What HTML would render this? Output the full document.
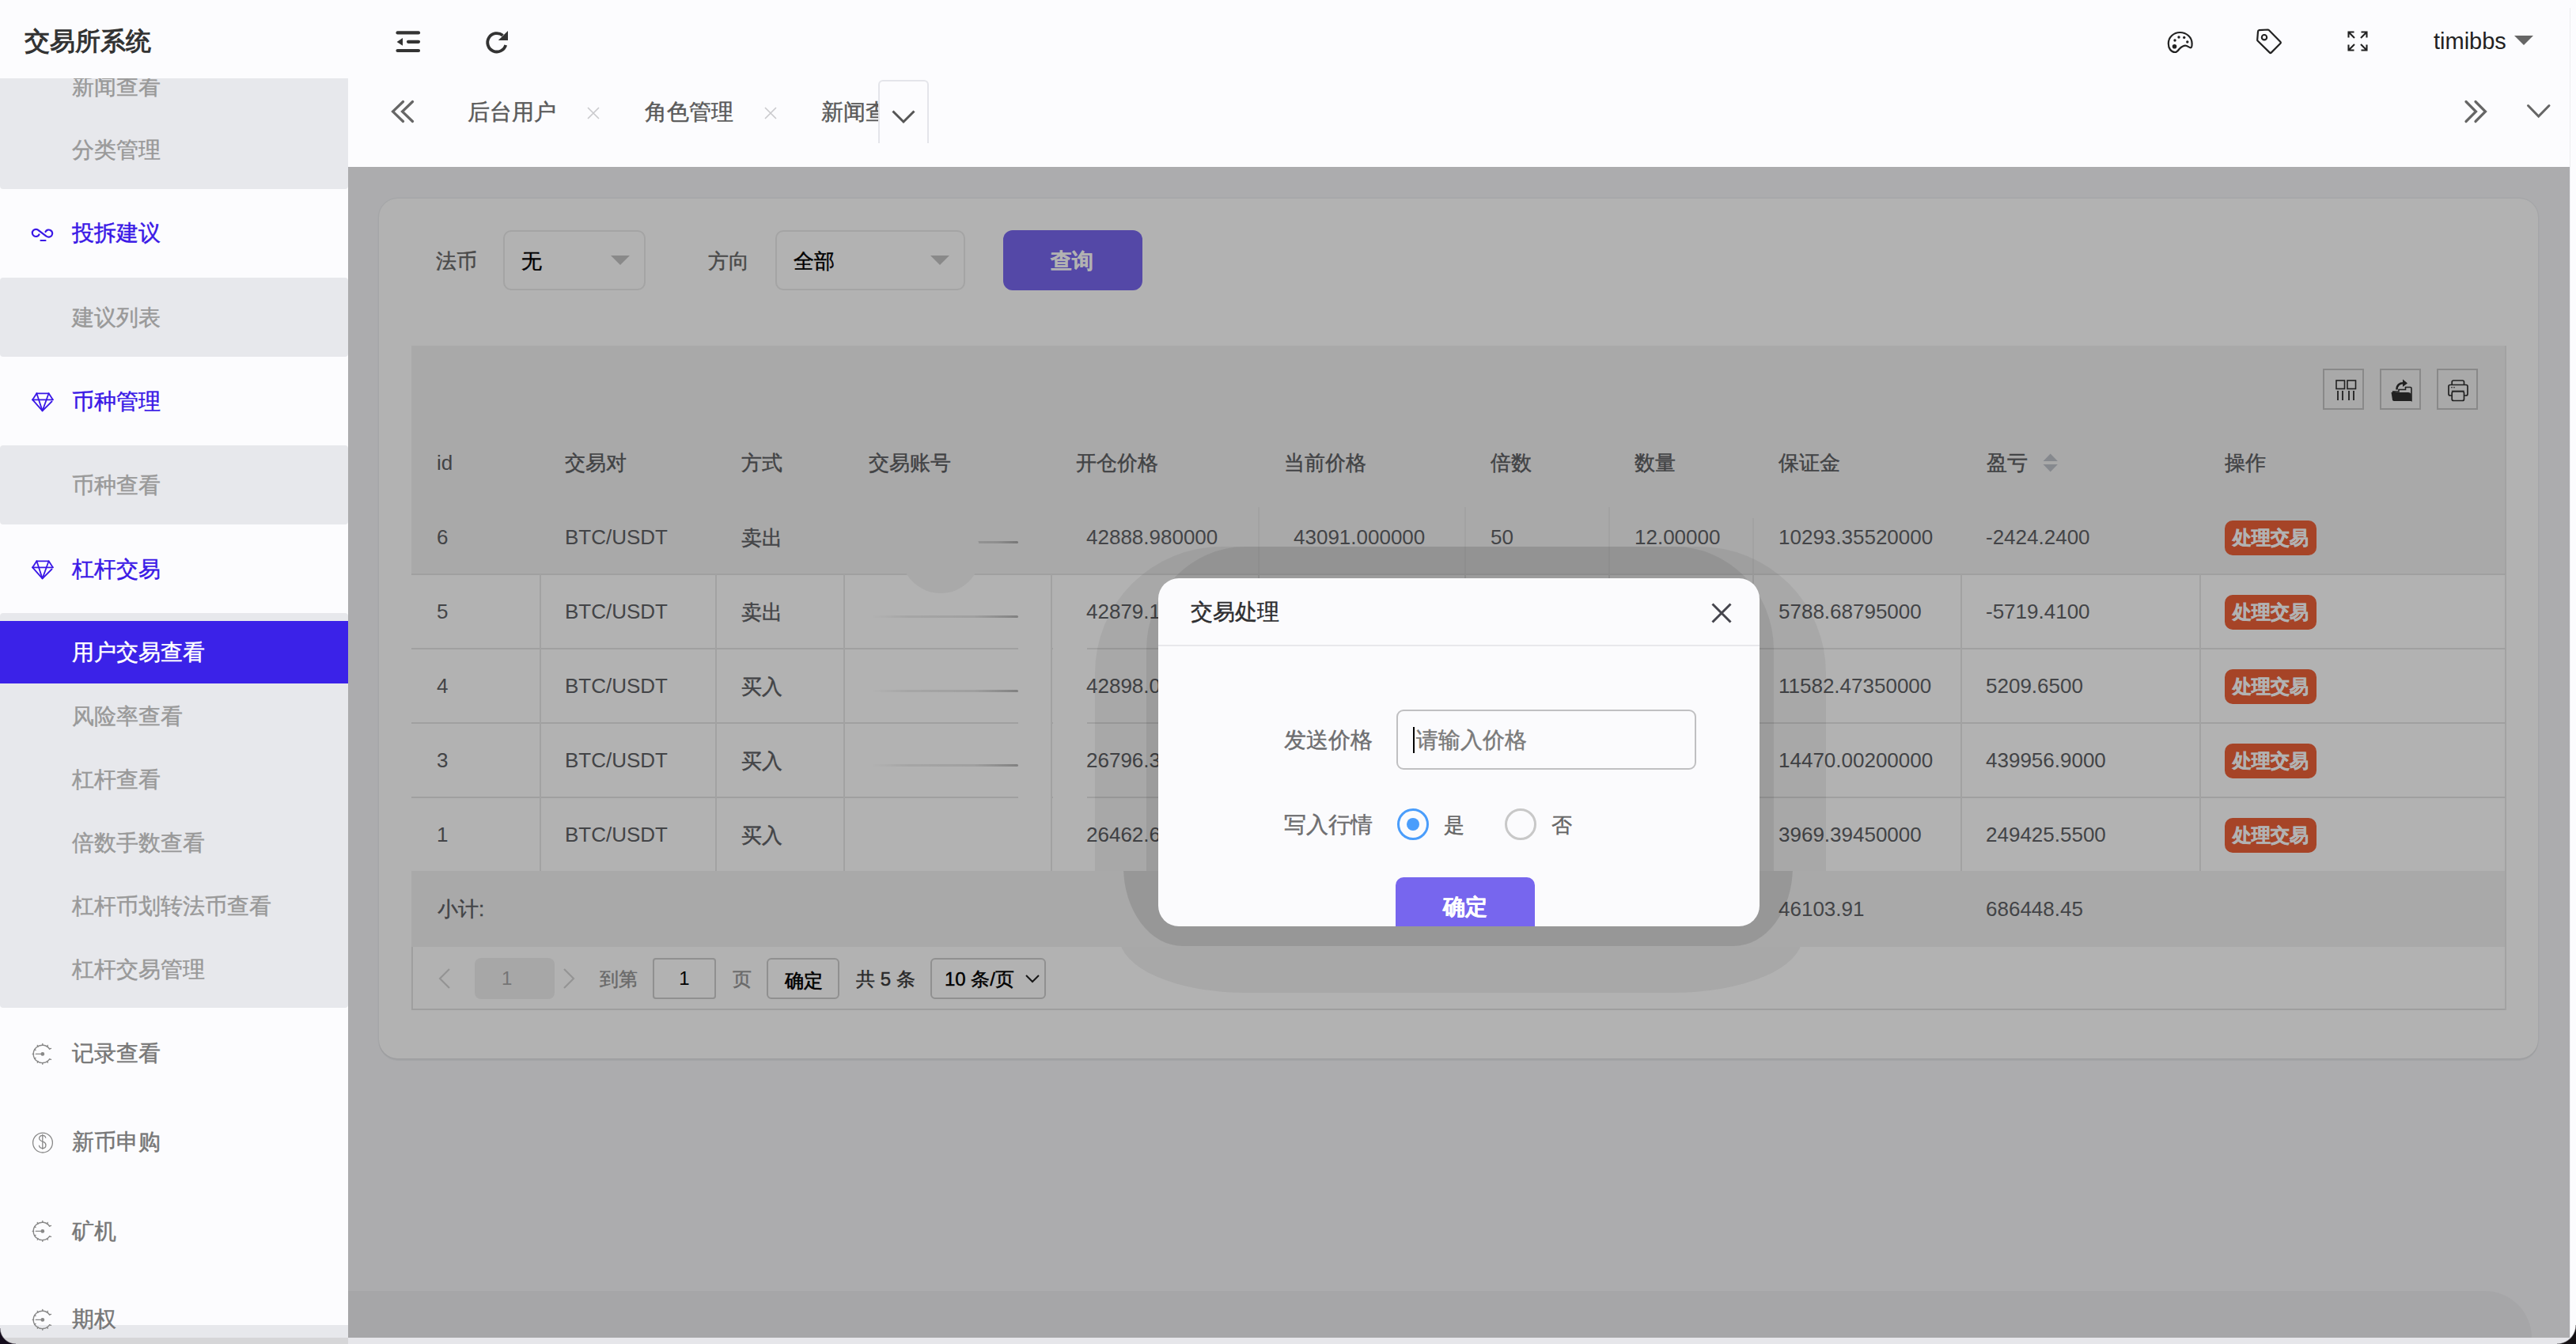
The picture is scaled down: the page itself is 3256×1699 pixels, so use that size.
<!DOCTYPE html>
<html><head><meta charset="utf-8">
<style>
*{box-sizing:border-box;margin:0;padding:0}
html,body{width:3256px;height:1699px;overflow:hidden;background:#d6d6d8;font-family:"Liberation Sans",sans-serif;-webkit-text-stroke-width:0.45px}
.a{position:absolute}
.t{position:absolute;white-space:nowrap;line-height:1}
svg{position:absolute;overflow:visible}
#side{left:0;top:0;width:440px;height:1691px;background:#fcfcfe;overflow:hidden}
.blk{position:absolute;left:0;width:440px;background:#e7e8ec;border-radius:4px}
.mt{position:absolute;left:91px;font-size:28px;color:#3a18e6;line-height:1;white-space:nowrap}
.mg{position:absolute;left:91px;font-size:28px;color:#777;line-height:1;white-space:nowrap}
.si{position:absolute;left:91px;font-size:28px;color:#999;line-height:1;white-space:nowrap}
.th{position:absolute;font-size:26px;color:#5e6063;line-height:1;white-space:nowrap;top:572px}
.td{position:absolute;font-size:26px;color:#606266;line-height:1;white-space:nowrap}
.tag{position:absolute;left:2812px;width:116px;height:44px;background:#ee6239;border-radius:10px;color:#fff;font-size:24px;font-weight:bold;line-height:44px;text-align:center;white-space:nowrap;-webkit-text-stroke:0.5px #fff}
.vl{position:absolute;width:2px;background:#e8e8e8}
.hl{position:absolute;height:2px;background:#e6e6e6;left:520px;width:2647px}
</style></head><body>
<!-- ============ SIDEBAR ============ -->
<div id="side" class="a">
  <div class="blk" style="top:50px;height:189px;border-radius:0 0 4px 4px"></div>
  <div class="si" style="top:96px">新闻查看</div>
  <div class="si" style="top:176px">分类管理</div>
  <svg style="left:40px;top:288px" width="28" height="18" viewBox="0 0 28 18"><g fill="none" stroke="#3a18e6" stroke-width="2.2" stroke-linecap="round"><path d="M9.5,8.5 A4.6,4.6 0 1 1 9,3.5 L18.5,10.5 A4.6,4.6 0 1 0 17.5,5"/><path d="M11.5,16 H17.5"/></g></svg>
  <div class="mt" style="top:281px">投拆建议</div>
  <div class="blk" style="top:351px;height:100px"></div>
  <div class="si" style="top:388px">建议列表</div>
  <svg style="left:40px;top:495px" width="28" height="26" viewBox="0 0 28 26"><g fill="none" stroke="#3a18e6" stroke-width="1.8" stroke-linejoin="round" stroke-linecap="round"><path d="M6.4,2.3 H21.6 L26.8,10.3"/><path d="M1.2,10.3 L6.4,2.3"/><path d="M1.2,10.3 H26.8"/><path d="M6.4,2.3 L13.6,24.4 L21.6,2.3"/><path d="M1.2,10.3 L13.6,24.4 L25.5,12.5"/></g></svg>
  <div class="mt" style="top:494px">币种管理</div>
  <div class="blk" style="top:563px;height:100px"></div>
  <div class="si" style="top:600px">币种查看</div>
  <svg style="left:40px;top:707px" width="28" height="26" viewBox="0 0 28 26"><g fill="none" stroke="#3a18e6" stroke-width="1.8" stroke-linejoin="round" stroke-linecap="round"><path d="M6.4,2.3 H21.6 L26.8,10.3"/><path d="M1.2,10.3 L6.4,2.3"/><path d="M1.2,10.3 H26.8"/><path d="M6.4,2.3 L13.6,24.4 L21.6,2.3"/><path d="M1.2,10.3 L13.6,24.4 L25.5,12.5"/></g></svg>
  <div class="mt" style="top:706px">杠杆交易</div>
  <div class="blk" style="top:775px;height:499px"></div>
  <div class="a" style="left:0;top:785px;width:440px;height:79px;background:#3b22e8"></div>
  <div class="si" style="top:811px;color:#fff">用户交易查看</div>
  <div class="si" style="top:892px">风险率查看</div>
  <div class="si" style="top:972px">杠杆查看</div>
  <div class="si" style="top:1052px">倍数手数查看</div>
  <div class="si" style="top:1132px">杠杆币划转法币查看</div>
  <div class="si" style="top:1212px">杠杆交易管理</div>
  <svg id="dial1" style="left:40px;top:1318px" width="28" height="28" viewBox="0 0 28 28"><g fill="none" stroke="#888" stroke-width="1.4" stroke-linecap="round"><path d="M22.6,8 A11.2,11.2 0 1 0 22.6,20.8"/><path d="M5.3,14.4 H13.8"/><path d="M13.8,1.5 V3.2 M13.8,25.6 V27.3 M1.2,14.4 H2.6 M7.3,3.5 L8,5.2 M20.3,3.5 L19.6,5.2 M7.3,25.3 L8,23.6 M20.3,25.3 L19.6,23.6 M3.6,8.5 L5,9.4 M3.6,20.3 L5,19.4 M22.6,8 L24.5,7.4 M22.6,20.8 L24.5,21.4"/></g><circle cx="13.8" cy="14.4" r="2.4" fill="#888"/></svg>
  <div class="mg" style="top:1318px">记录查看</div>
  <svg style="left:41px;top:1432px" width="26" height="26" viewBox="0 0 26 26"><circle cx="13" cy="12.6" r="12.4" fill="none" stroke="#888" stroke-width="1.3"/><path d="M16.8,6.6 C16.5,4.3 14.5,3.2 12.6,3.3 C10.2,3.4 8.4,4.9 8.6,7.2 C8.9,10.2 12.4,10.8 14.3,11.7 C16.2,12.6 17.2,14 16.9,16.3 C16.6,18.5 14.7,19.6 12.6,19.5 C10.4,19.4 8.6,18.3 8.4,15.7 M12.8,1.8 V21" fill="none" stroke="#888" stroke-width="1.3"/></svg>
  <div class="mg" style="top:1430px">新币申购</div>
  <svg style="left:40px;top:1542px" width="28" height="28" viewBox="0 0 28 28"><g fill="none" stroke="#888" stroke-width="1.4" stroke-linecap="round"><path d="M22.6,8 A11.2,11.2 0 1 0 22.6,20.8"/><path d="M5.3,14.4 H13.8"/><path d="M13.8,1.5 V3.2 M13.8,25.6 V27.3 M1.2,14.4 H2.6 M7.3,3.5 L8,5.2 M20.3,3.5 L19.6,5.2 M7.3,25.3 L8,23.6 M20.3,25.3 L19.6,23.6 M3.6,8.5 L5,9.4 M3.6,20.3 L5,19.4 M22.6,8 L24.5,7.4 M22.6,20.8 L24.5,21.4"/></g><circle cx="13.8" cy="14.4" r="2.4" fill="#888"/></svg>
  <div class="mg" style="top:1543px">矿机</div>
  <div class="a" style="left:0;top:1675px;width:440px;height:16px;background:#e7e8ec"></div>
  <svg style="left:40px;top:1654px" width="28" height="28" viewBox="0 0 28 28"><g fill="none" stroke="#888" stroke-width="1.4" stroke-linecap="round"><path d="M22.6,8 A11.2,11.2 0 1 0 22.6,20.8"/><path d="M5.3,14.4 H13.8"/><path d="M13.8,1.5 V3.2 M13.8,25.6 V27.3 M1.2,14.4 H2.6 M7.3,3.5 L8,5.2 M20.3,3.5 L19.6,5.2 M7.3,25.3 L8,23.6 M20.3,25.3 L19.6,23.6 M3.6,8.5 L5,9.4 M3.6,20.3 L5,19.4 M22.6,8 L24.5,7.4 M22.6,20.8 L24.5,21.4"/></g><circle cx="13.8" cy="14.4" r="2.4" fill="#888"/></svg>
  <div class="mg" style="top:1654px">期权</div>
</div>

<!-- ============ HEADER ============ -->
<div class="a" style="left:0;top:0;width:3256px;height:99px;background:#fcfcfe"></div>
<div class="t" style="left:31px;top:36px;font-size:32px;font-weight:bold;color:#333;-webkit-text-stroke-width:0">交易所系统</div>
<svg style="left:498px;top:37px" width="36" height="32" viewBox="0 0 36 32"><g stroke="#333" stroke-width="4.2" stroke-linecap="round"><path d="M4.5,4.4 H31"/><path d="M18,15.8 H31"/><path d="M4.5,27 H31"/></g><path d="M3.6,16 L11,11 V20.8 Z" fill="#333"/></svg>
<svg style="left:610px;top:35px" width="36" height="36" viewBox="0 0 36 36"><path d="M29.2,22 A11.7,11.7 0 1 1 25.5,9.8" fill="none" stroke="#333" stroke-width="3.8"/><path d="M32,4 V16.1 H19.8 Z" fill="#333"/></svg>
<!-- right header icons -->
<svg style="left:2738px;top:38px" width="36" height="32" viewBox="0 0 36 32"><path d="M11.4,28 C6,28 2.8,23 2.8,17 C2.8,9 9.5,3 17.4,3 C25.5,3 32.6,9 32.6,17 C32.6,20 32.5,22.3 31,22.3 C29,22.3 27,19.7 24.3,19.7 C21,19.7 19,21.5 16.5,24 C15,26 13.5,28 11.4,28 Z" fill="none" stroke="#222" stroke-width="2.2" stroke-linejoin="round"/><circle cx="10.5" cy="20.7" r="2.8" fill="#222"/><circle cx="11" cy="13" r="1.7" fill="#222"/><circle cx="16" cy="9" r="1.7" fill="#222"/><circle cx="22.7" cy="9.4" r="1.7" fill="#222"/><circle cx="26.8" cy="15" r="1.7" fill="#222"/></svg>
<svg style="left:2850px;top:35px" width="36" height="36" viewBox="0 0 36 36"><path d="M4,5 Q4,3.3 5.5,3.1 L16.5,2.5 Q17.3,2.5 18,3.2 L32.5,18 Q33.3,19 32.5,19.8 L20.7,31.6 Q19.8,32.4 19,31.6 L3.8,16.8 Q3.2,16.2 3.2,15.4 Z" fill="none" stroke="#222" stroke-width="2.2" stroke-linejoin="round"/><circle cx="12" cy="12.2" r="3.2" fill="none" stroke="#222" stroke-width="2.1"/></svg>
<svg style="left:2966px;top:38px" width="28" height="28" viewBox="0 0 28 28"><g fill="none" stroke="#222" stroke-width="2.1"><path d="M2.5,9.5 V2.5 H9.5 M2.5,2.5 L10,10"/><path d="M18.5,2.5 H25.5 V9.5 M25.5,2.5 L18,10"/><path d="M2.5,18.5 V25.5 H9.5 M2.5,25.5 L10,18"/><path d="M25.5,18.5 V25.5 H18.5 M25.5,25.5 L18,18"/></g></svg>
<div class="t" style="left:3076px;top:38px;font-size:29px;color:#222;-webkit-text-stroke-width:0">timibbs</div>
<svg style="left:3178px;top:45px" width="25" height="13" viewBox="0 0 25 13"><path d="M0,0 H24 L12,12 Z" fill="#666"/></svg>
<div class="a" style="left:3248px;top:10px;width:1px;height:201px;background:#ececef"></div>

<!-- ============ TABS ============ -->
<div class="a" style="left:440px;top:99px;width:2808px;height:112px;background:#fcfcfe"></div>
<svg style="left:492px;top:125px" width="34" height="32" viewBox="0 0 34 32"><g fill="none" stroke="#666" stroke-width="3.2" stroke-linecap="round" stroke-linejoin="miter"><path d="M17.5,3.5 L4.5,16 L17.5,28.5"/><path d="M29.5,3.5 L16.5,16 L29.5,28.5"/></g></svg>
<div class="t" style="left:591px;top:128px;font-size:28px;color:#5a5a5a">后台用户</div>
<svg style="left:742px;top:135px" width="16" height="16" viewBox="0 0 16 16"><path d="M1,1 L15,15 M15,1 L1,15" stroke="#c9c9cc" stroke-width="1.6"/></svg>
<div class="t" style="left:815px;top:128px;font-size:28px;color:#5a5a5a">角色管理</div>
<svg style="left:966px;top:135px" width="16" height="16" viewBox="0 0 16 16"><path d="M1,1 L15,15 M15,1 L1,15" stroke="#c9c9cc" stroke-width="1.6"/></svg>
<div class="a" style="left:1038px;top:99px;width:72px;height:112px;overflow:hidden"><div class="t" style="left:0;top:29px;font-size:28px;color:#5a5a5a">新闻查看</div></div>
<div class="a" style="left:1110px;top:101px;width:64px;height:80px;border:2px solid #e4e5ea;border-bottom:none;border-radius:6px 6px 0 0;background:#fcfcfe"></div>
<svg style="left:1126px;top:138px" width="32" height="20" viewBox="0 0 32 20"><path d="M2.5,2.5 L16,16 L29.5,2.5" fill="none" stroke="#555" stroke-width="3"/></svg>
<svg style="left:3113px;top:125px" width="34" height="32" viewBox="0 0 34 32"><g fill="none" stroke="#666" stroke-width="3.2" stroke-linecap="round"><path d="M4,3.5 L16.5,16 L4,28.5"/><path d="M16,3.5 L28.5,16 L16,28.5"/></g></svg>
<svg style="left:3193px;top:131px" width="32" height="20" viewBox="0 0 32 20"><path d="M2.5,2.5 L15.7,16 L29,2.5" fill="none" stroke="#666" stroke-width="3" stroke-linecap="round"/></svg>

<!-- ============ CONTENT ============ -->
<div id="content" class="a" style="left:440px;top:211px;width:2808px;height:1480px;background:#f6f7fa;overflow:hidden"></div>
<div class="a" style="left:479px;top:251px;width:2729px;height:1087px;background:#fff;border-radius:24px;box-shadow:0 3px 0 rgba(0,0,0,.045),0 0 0 1.5px rgba(0,0,0,.035)"></div>
<!-- filter -->
<div class="t" style="left:551px;top:317px;font-size:26px;color:#6a6a6a">法币</div>
<div class="a" style="left:636px;top:291px;width:180px;height:76px;border:2px solid #ebebeb;border-radius:10px"></div>
<div class="t" style="left:659px;top:317px;font-size:26px;color:#000">无</div>
<svg style="left:772px;top:323px" width="24" height="12" viewBox="0 0 24 12"><path d="M0,0 H24 L12,12 Z" fill="#c5c5c5"/></svg>
<div class="t" style="left:895px;top:317px;font-size:26px;color:#6a6a6a">方向</div>
<div class="a" style="left:980px;top:291px;width:240px;height:76px;border:2px solid #ebebeb;border-radius:10px"></div>
<div class="t" style="left:1003px;top:317px;font-size:26px;color:#000">全部</div>
<svg style="left:1176px;top:323px" width="24" height="12" viewBox="0 0 24 12"><path d="M0,0 H24 L12,12 Z" fill="#c5c5c5"/></svg>
<div class="a" style="left:1268px;top:291px;width:176px;height:76px;background:#7968f0;border-radius:12px"></div>
<div class="t" style="left:1328px;top:317px;font-size:27px;font-weight:bold;color:#fff;-webkit-text-stroke-width:0.2px">查询</div>

<!-- table -->
<div class="a" style="left:520px;top:437px;width:2647px;height:195px;background:#f3f3f3"></div>
<div class="a" style="left:520px;top:632px;width:2647px;height:94px;background:#f3f3f3"></div>
<div class="vl" style="left:1590px;top:641px;height:85px"></div><div class="vl" style="left:1851px;top:641px;height:85px"></div><div class="vl" style="left:2033px;top:641px;height:85px"></div><div class="vl" style="left:2215px;top:655px;height:71px"></div>
<div class="a" style="left:520px;top:1101px;width:2647px;height:96px;background:#f3f3f3"></div>
<div class="a" style="left:520px;top:1197px;width:2px;height:80px;background:#e4e4e4"></div>
<div class="a" style="left:520px;top:1275px;width:2647px;height:2px;background:#e4e4e4"></div>
<div class="a" style="left:3166px;top:437px;width:2px;height:840px;background:#e8e8e8"></div>
<!-- toolbar -->
<div class="a" style="left:2936px;top:466px;width:52px;height:52px;border:2px solid #c4c4c4"></div>
<div class="a" style="left:3008px;top:466px;width:52px;height:52px;border:2px solid #c4c4c4"></div>
<div class="a" style="left:3080px;top:466px;width:52px;height:52px;border:2px solid #c4c4c4"></div>
<svg style="left:2950px;top:478px" width="30" height="30" viewBox="0 0 30 30"><g fill="none" stroke="#303030"><rect x="3" y="3" width="10.5" height="10.5" stroke-width="1.6"/><rect x="17" y="3" width="10.5" height="10.5" stroke-width="1.6"/><path d="M5,16 V28 M11,16 V28 M19,16 V28 M25,16 V28" stroke-width="1.8"/></g></svg>
<svg style="left:3020px;top:478px" width="30" height="32" viewBox="0 0 30 32"><path d="M4,17 H12 V14.5 H20.5 V11.5 H26.5 Q28,11.5 28,13 V28.5 Z" fill="none" stroke="#303030" stroke-width="1.6"/><path d="M2.5,18 H24 Q26.5,18 27.5,20 L28,29 H6 Q4.5,29 4,27.5 Z" fill="#303030"/><path d="M9.5,14.5 C9.5,9 13,6 18,6.2" fill="none" stroke="#303030" stroke-width="2.6"/><path d="M17,1.5 L23,6.4 L17,11 Z" fill="#303030"/></svg>
<svg style="left:3092px;top:478px" width="30" height="32" viewBox="0 0 30 32"><g fill="none" stroke="#303030" stroke-width="1.7"><path d="M7.2,8 V5 Q7.2,3 9.2,3 H20.5 Q22.5,3 22.5,5 V8"/><path d="M7,22 H5 Q3,22 3,20 V10.5 Q3,8.5 5,8.5 H25 Q27,8.5 27,10.5 V20 Q27,22 25,22 H23"/><rect x="7.2" y="17" width="15.3" height="11.5" rx="2"/></g><path d="M6.8,16.2 H22.8" stroke="#303030" stroke-width="1.1"/><path d="M6,11.8 H8 M9,11.8 H11" stroke="#303030" stroke-width="1"/></svg>
<!-- header texts -->
<div class="th" style="-webkit-text-stroke-width:0;left:552px">id</div>
<div class="th" style="left:714px">交易对</div>
<div class="th" style="left:937px">方式</div>
<div class="th" style="left:1098px">交易账号</div>
<div class="th" style="left:1360px">开仓价格</div>
<div class="th" style="left:1623px">当前价格</div>
<div class="th" style="left:1884px">倍数</div>
<div class="th" style="left:2066px">数量</div>
<div class="th" style="left:2248px">保证金</div>
<div class="th" style="left:2511px">盈亏</div>
<svg style="left:2582px;top:573px" width="20" height="24" viewBox="0 0 20 24"><path d="M0.5,10 L9.7,0.6 L18.9,10 Z M0.5,14 L9.7,23.4 L18.9,14 Z" fill="#c0c4cc"/></svg>
<div class="th" style="left:2812px">操作</div>
<div class="hl" style="top:725px"></div>
<div class="hl" style="top:819px"></div>
<div class="hl" style="top:913px"></div>
<div class="hl" style="top:1007px"></div>
<div class="vl" style="left:682px;top:726px;height:375px"></div>
<div class="vl" style="left:904px;top:726px;height:375px"></div>
<div class="vl" style="left:1066px;top:726px;height:375px"></div>
<div class="vl" style="left:1328px;top:726px;height:375px"></div>
<div class="vl" style="left:1590px;top:726px;height:375px"></div>
<div class="vl" style="left:1851px;top:726px;height:375px"></div>
<div class="vl" style="left:2033px;top:726px;height:375px"></div>
<div class="vl" style="left:2215px;top:726px;height:375px"></div>
<div class="vl" style="left:2478px;top:726px;height:375px"></div>
<div class="vl" style="left:2780px;top:726px;height:375px"></div>
<div class="td" style="-webkit-text-stroke-width:0;left:552px;top:666px">6</div>
<div class="td" style="-webkit-text-stroke-width:0;left:714px;top:666px">BTC/USDT</div>
<div class="td" style="left:937px;top:666.5px">卖出</div>
<div class="td" style="-webkit-text-stroke-width:0;left:1373px;top:666px">42888.980000</div>
<div class="td" style="-webkit-text-stroke-width:0;left:1635px;top:666px">43091.000000</div>
<div class="td" style="-webkit-text-stroke-width:0;left:1884px;top:666px">50</div>
<div class="td" style="-webkit-text-stroke-width:0;left:2066px;top:666px">12.00000</div>
<div class="td" style="-webkit-text-stroke-width:0;left:2248px;top:666px">10293.35520000</div>
<div class="td" style="-webkit-text-stroke-width:0;left:2510px;top:666px">-2424.2400</div>
<div class="tag" style="top:658px">处理交易</div>
<div class="td" style="-webkit-text-stroke-width:0;left:552px;top:760px">5</div>
<div class="td" style="-webkit-text-stroke-width:0;left:714px;top:760px">BTC/USDT</div>
<div class="td" style="left:937px;top:760.5px">卖出</div>
<div class="td" style="-webkit-text-stroke-width:0;left:1373px;top:760px">42879.1</div>
<div class="td" style="-webkit-text-stroke-width:0;left:2248px;top:760px">5788.68795000</div>
<div class="td" style="-webkit-text-stroke-width:0;left:2510px;top:760px">-5719.4100</div>
<div class="tag" style="top:752px">处理交易</div>
<div class="td" style="-webkit-text-stroke-width:0;left:552px;top:854px">4</div>
<div class="td" style="-webkit-text-stroke-width:0;left:714px;top:854px">BTC/USDT</div>
<div class="td" style="left:937px;top:854.5px">买入</div>
<div class="td" style="-webkit-text-stroke-width:0;left:1373px;top:854px">42898.0</div>
<div class="td" style="-webkit-text-stroke-width:0;left:2248px;top:854px">11582.47350000</div>
<div class="td" style="-webkit-text-stroke-width:0;left:2510px;top:854px">5209.6500</div>
<div class="tag" style="top:846px">处理交易</div>
<div class="td" style="-webkit-text-stroke-width:0;left:552px;top:948px">3</div>
<div class="td" style="-webkit-text-stroke-width:0;left:714px;top:948px">BTC/USDT</div>
<div class="td" style="left:937px;top:948.5px">买入</div>
<div class="td" style="-webkit-text-stroke-width:0;left:1373px;top:948px">26796.3</div>
<div class="td" style="-webkit-text-stroke-width:0;left:2248px;top:948px">14470.00200000</div>
<div class="td" style="-webkit-text-stroke-width:0;left:2510px;top:948px">439956.9000</div>
<div class="tag" style="top:940px">处理交易</div>
<div class="td" style="-webkit-text-stroke-width:0;left:552px;top:1042px">1</div>
<div class="td" style="-webkit-text-stroke-width:0;left:714px;top:1042px">BTC/USDT</div>
<div class="td" style="left:937px;top:1042.5px">买入</div>
<div class="td" style="-webkit-text-stroke-width:0;left:1373px;top:1042px">26462.6</div>
<div class="td" style="-webkit-text-stroke-width:0;left:2248px;top:1042px">3969.39450000</div>
<div class="td" style="-webkit-text-stroke-width:0;left:2510px;top:1042px">249425.5500</div>
<div class="tag" style="top:1034px">处理交易</div>
<div class="td" style="left:553px;top:1136px">小计:</div>
<div class="td" style="-webkit-text-stroke-width:0;left:2248px;top:1136px">46103.91</div>
<div class="td" style="-webkit-text-stroke-width:0;left:2510px;top:1136px">686448.45</div>
<svg style="left:553px;top:1223px" width="18" height="28" viewBox="0 0 18 28"><path d="M15,2 L3,14 L15,26" fill="none" stroke="#d5d5d5" stroke-width="2.2"/></svg>
<div class="a" style="left:600px;top:1211px;width:101px;height:52px;background:#f0f0f0;border-radius:8px"></div>
<div class="t" style="left:634px;top:1225px;font-size:24px;color:#a8a8a8;-webkit-text-stroke-width:0">1</div>
<svg style="left:710px;top:1223px" width="18" height="28" viewBox="0 0 18 28"><path d="M3,2 L15,14 L3,26" fill="none" stroke="#d5d5d5" stroke-width="2.2"/></svg>
<div class="t" style="left:758px;top:1226px;font-size:24px;color:#989898">到第</div>
<div class="a" style="left:825px;top:1211px;width:80px;height:52px;border:2px solid #cecece;border-radius:4px"></div>
<div class="t" style="left:825px;top:1225px;width:80px;text-align:center;font-size:24px;color:#000;-webkit-text-stroke-width:0">1</div>
<div class="t" style="left:926px;top:1226px;font-size:24px;color:#989898">页</div>
<div class="a" style="left:969px;top:1211px;width:92px;height:52px;border:2px solid #cecece;border-radius:6px"></div>
<div class="t" style="left:992px;top:1228px;font-size:24px;color:#000;-webkit-text-stroke:0.6px #000">确定</div>
<div class="t" style="left:1082px;top:1226px;font-size:24px;color:#3c3c3c">共 5 条</div>
<div class="a" style="left:1176px;top:1211px;width:146px;height:52px;border:2px solid #cecece;border-radius:6px"></div>
<div class="t" style="left:1194px;top:1226px;font-size:24px;color:#000">10 条/页</div>
<svg style="left:1295px;top:1230px" width="20" height="14" viewBox="0 0 20 14"><path d="M2,3 L10,11 L18,3" fill="none" stroke="#222" stroke-width="2"/></svg>
<div class="a" style="left:1182px;top:684px;width:105px;height:3px;border-radius:2px;background:linear-gradient(90deg,rgba(0,0,0,.05),rgba(0,0,0,.12) 40%,rgba(0,0,0,.16) 75%,rgba(0,0,0,.3))"></div>
<div class="a" style="left:1102px;top:778px;width:185px;height:3px;border-radius:2px;background:linear-gradient(90deg,rgba(0,0,0,0),rgba(0,0,0,.07) 25%,rgba(0,0,0,.1) 70%,rgba(0,0,0,.28))"></div>
<div class="a" style="left:1102px;top:872px;width:185px;height:3px;border-radius:2px;background:linear-gradient(90deg,rgba(0,0,0,0),rgba(0,0,0,.07) 25%,rgba(0,0,0,.1) 70%,rgba(0,0,0,.28))"></div>
<div class="a" style="left:1102px;top:966px;width:185px;height:3px;border-radius:2px;background:linear-gradient(90deg,rgba(0,0,0,0),rgba(0,0,0,.07) 25%,rgba(0,0,0,.1) 70%,rgba(0,0,0,.28))"></div>
<div class="a" style="left:1287px;top:819px;width:41px;height:2px;background:#fff"></div><div class="a" style="left:1331px;top:819px;width:43px;height:2px;background:#fff"></div><div class="a" style="left:1287px;top:913px;width:41px;height:2px;background:#fff"></div><div class="a" style="left:1331px;top:913px;width:43px;height:2px;background:#fff"></div><div class="a" style="left:1287px;top:1007px;width:41px;height:2px;background:#fff"></div><div class="a" style="left:1331px;top:1007px;width:43px;height:2px;background:#fff"></div>
<div class="a" style="left:1139px;top:650px;width:100px;height:100px;background:#f3f3f3;border-radius:50%"></div>
<!-- ============ OVERLAY ============ -->
<div class="a" style="left:440px;top:211px;width:2808px;height:1480px;background:rgba(0,0,0,.3)"></div>
<div class="a" style="left:440px;top:1632px;width:2760px;height:59px;background:rgba(0,0,0,.03);border-radius:0 200px 0 0"></div>
<!-- ghost shadows -->
<div class="a" style="left:1300px;top:691px;width:1100px;height:410px;overflow:hidden">
  <div class="a" style="left:84px;top:0;width:924px;height:700px;background:rgba(0,0,0,.055);border-radius:160px"></div>
  <div class="a" style="left:149px;top:0;width:793px;height:700px;background:rgba(0,0,0,.07);border-radius:125px/130px"></div>
</div>
<div class="a" style="left:1300px;top:1101px;width:1100px;height:96px;overflow:hidden">
  <div class="a" style="left:120px;top:-300px;width:846px;height:395px;background:rgba(0,0,0,.1);border-radius:0 0 75px 75px/0 0 100px 100px"></div>
</div>
<div class="a" style="left:1300px;top:1197px;width:1100px;height:60px;overflow:hidden">
  <div class="a" style="left:115px;top:-400px;width:863px;height:458px;background:rgba(0,0,0,.055);border-radius:0 0 165px 160px/0 0 70px 70px"></div>
</div>
<!-- ============ MODAL ============ -->
<div class="a" style="left:1464px;top:731px;width:760px;height:440px;background:#fbfbfd;border-radius:26px;overflow:hidden">
  <div class="a" style="left:0;top:84px;width:760px;height:2px;background:#e8e8ec"></div>
</div>
<div class="t" style="left:1505px;top:760px;font-size:28px;color:#2e2e30">交易处理</div>
<svg style="left:2162px;top:761px" width="28" height="28" viewBox="0 0 28 28"><path d="M2.5,2.5 L25.5,25.5 M25.5,2.5 L2.5,25.5" stroke="#45454d" stroke-width="3"/></svg>
<div class="t" style="left:1623px;top:922px;font-size:28px;color:#6e6e70">发送价格</div>
<div class="a" style="left:1765px;top:897px;width:379px;height:76px;border:2px solid #c0c0c2;border-radius:9px"></div>
<div class="a" style="left:1786px;top:919px;width:2px;height:33px;background:#000"></div>
<div class="t" style="left:1790px;top:922px;font-size:28px;color:#7a7a7a">请输入价格</div>
<div class="t" style="left:1623px;top:1029px;font-size:28px;color:#6e6e70">写入行情</div>
<div class="a" style="left:1766px;top:1022px;width:40px;height:40px;border:3px solid #4a9dfb;border-radius:50%"></div>
<div class="a" style="left:1778px;top:1034px;width:16px;height:16px;background:#4a9dfb;border-radius:50%"></div>
<div class="t" style="left:1825px;top:1030px;font-size:26px;color:#666">是</div>
<div class="a" style="left:1902px;top:1022px;width:40px;height:40px;border:3px solid #c8c8c8;border-radius:50%"></div>
<div class="t" style="left:1961px;top:1030px;font-size:26px;color:#666">否</div>
<div class="a" style="left:1764px;top:1109px;width:176px;height:62px;background:#7766ee;border-radius:10px 10px 0 0"></div>
<div class="t" style="left:1764px;top:1133px;width:176px;text-align:center;font-size:28px;font-weight:bold;color:#fff;-webkit-text-stroke-width:0.2px">确定</div>
<!-- window edges -->
<div class="a" style="left:3248px;top:99px;width:8px;height:1600px;background:#fcfcfe"></div>
<div class="a" style="left:3248px;top:10px;width:1px;height:1681px;background:#ececef"></div>
<div class="a" style="left:0;top:1691px;width:440px;height:8px;background:#d6d6d8"></div>
<div class="a" style="left:440px;top:1691px;width:2808px;height:8px;background:#e6e6ea"></div>
<div class="a" style="left:0;top:1679px;width:20px;height:20px;background:radial-gradient(circle at 20px 0,rgba(0,0,0,0) 19px,#140c1c 20.5px)"></div>
<div class="a" style="left:3232px;top:1675px;width:24px;height:24px;background:radial-gradient(circle at 0 0,rgba(0,0,0,0) 23px,#141014 24.5px)"></div>
</body></html>
